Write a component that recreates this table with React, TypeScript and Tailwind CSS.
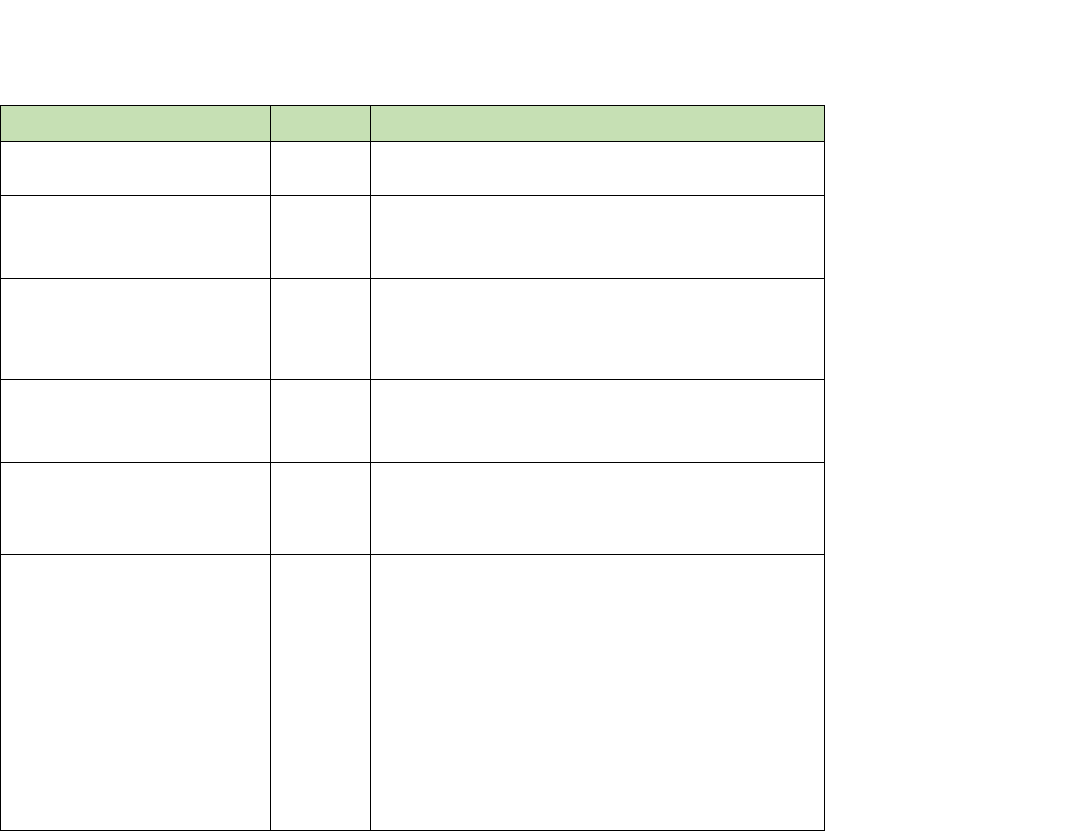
const rows = ["h-[54px]", "h-[83px]", "h-[101px]", "h-[83px]", "h-[92px]", "h-[276px]"];

function Row({ height, header }: { height: string; header?: boolean }) {
  const cell = `${height} border-r border-b border-black ${header ? "bg-[#c6e0b4]" : "bg-white"}`;
  return (
    <>
      <div className={cell} />
      <div className={cell} />
      <div className={cell} />
    </>
  );
}

export default function App() {
  return (
    <main className="min-h-screen bg-white pt-[105px] font-['Liberation_Sans',sans-serif]">
      <div className="grid w-[825px] grid-cols-[270px_100px_454px] border-t border-l border-black">
        <Row height="h-[36px]" header />
        {rows.map((h, i) => (
          <Row key={i} height={h} />
        ))}
      </div>
    </main>
  );
}
